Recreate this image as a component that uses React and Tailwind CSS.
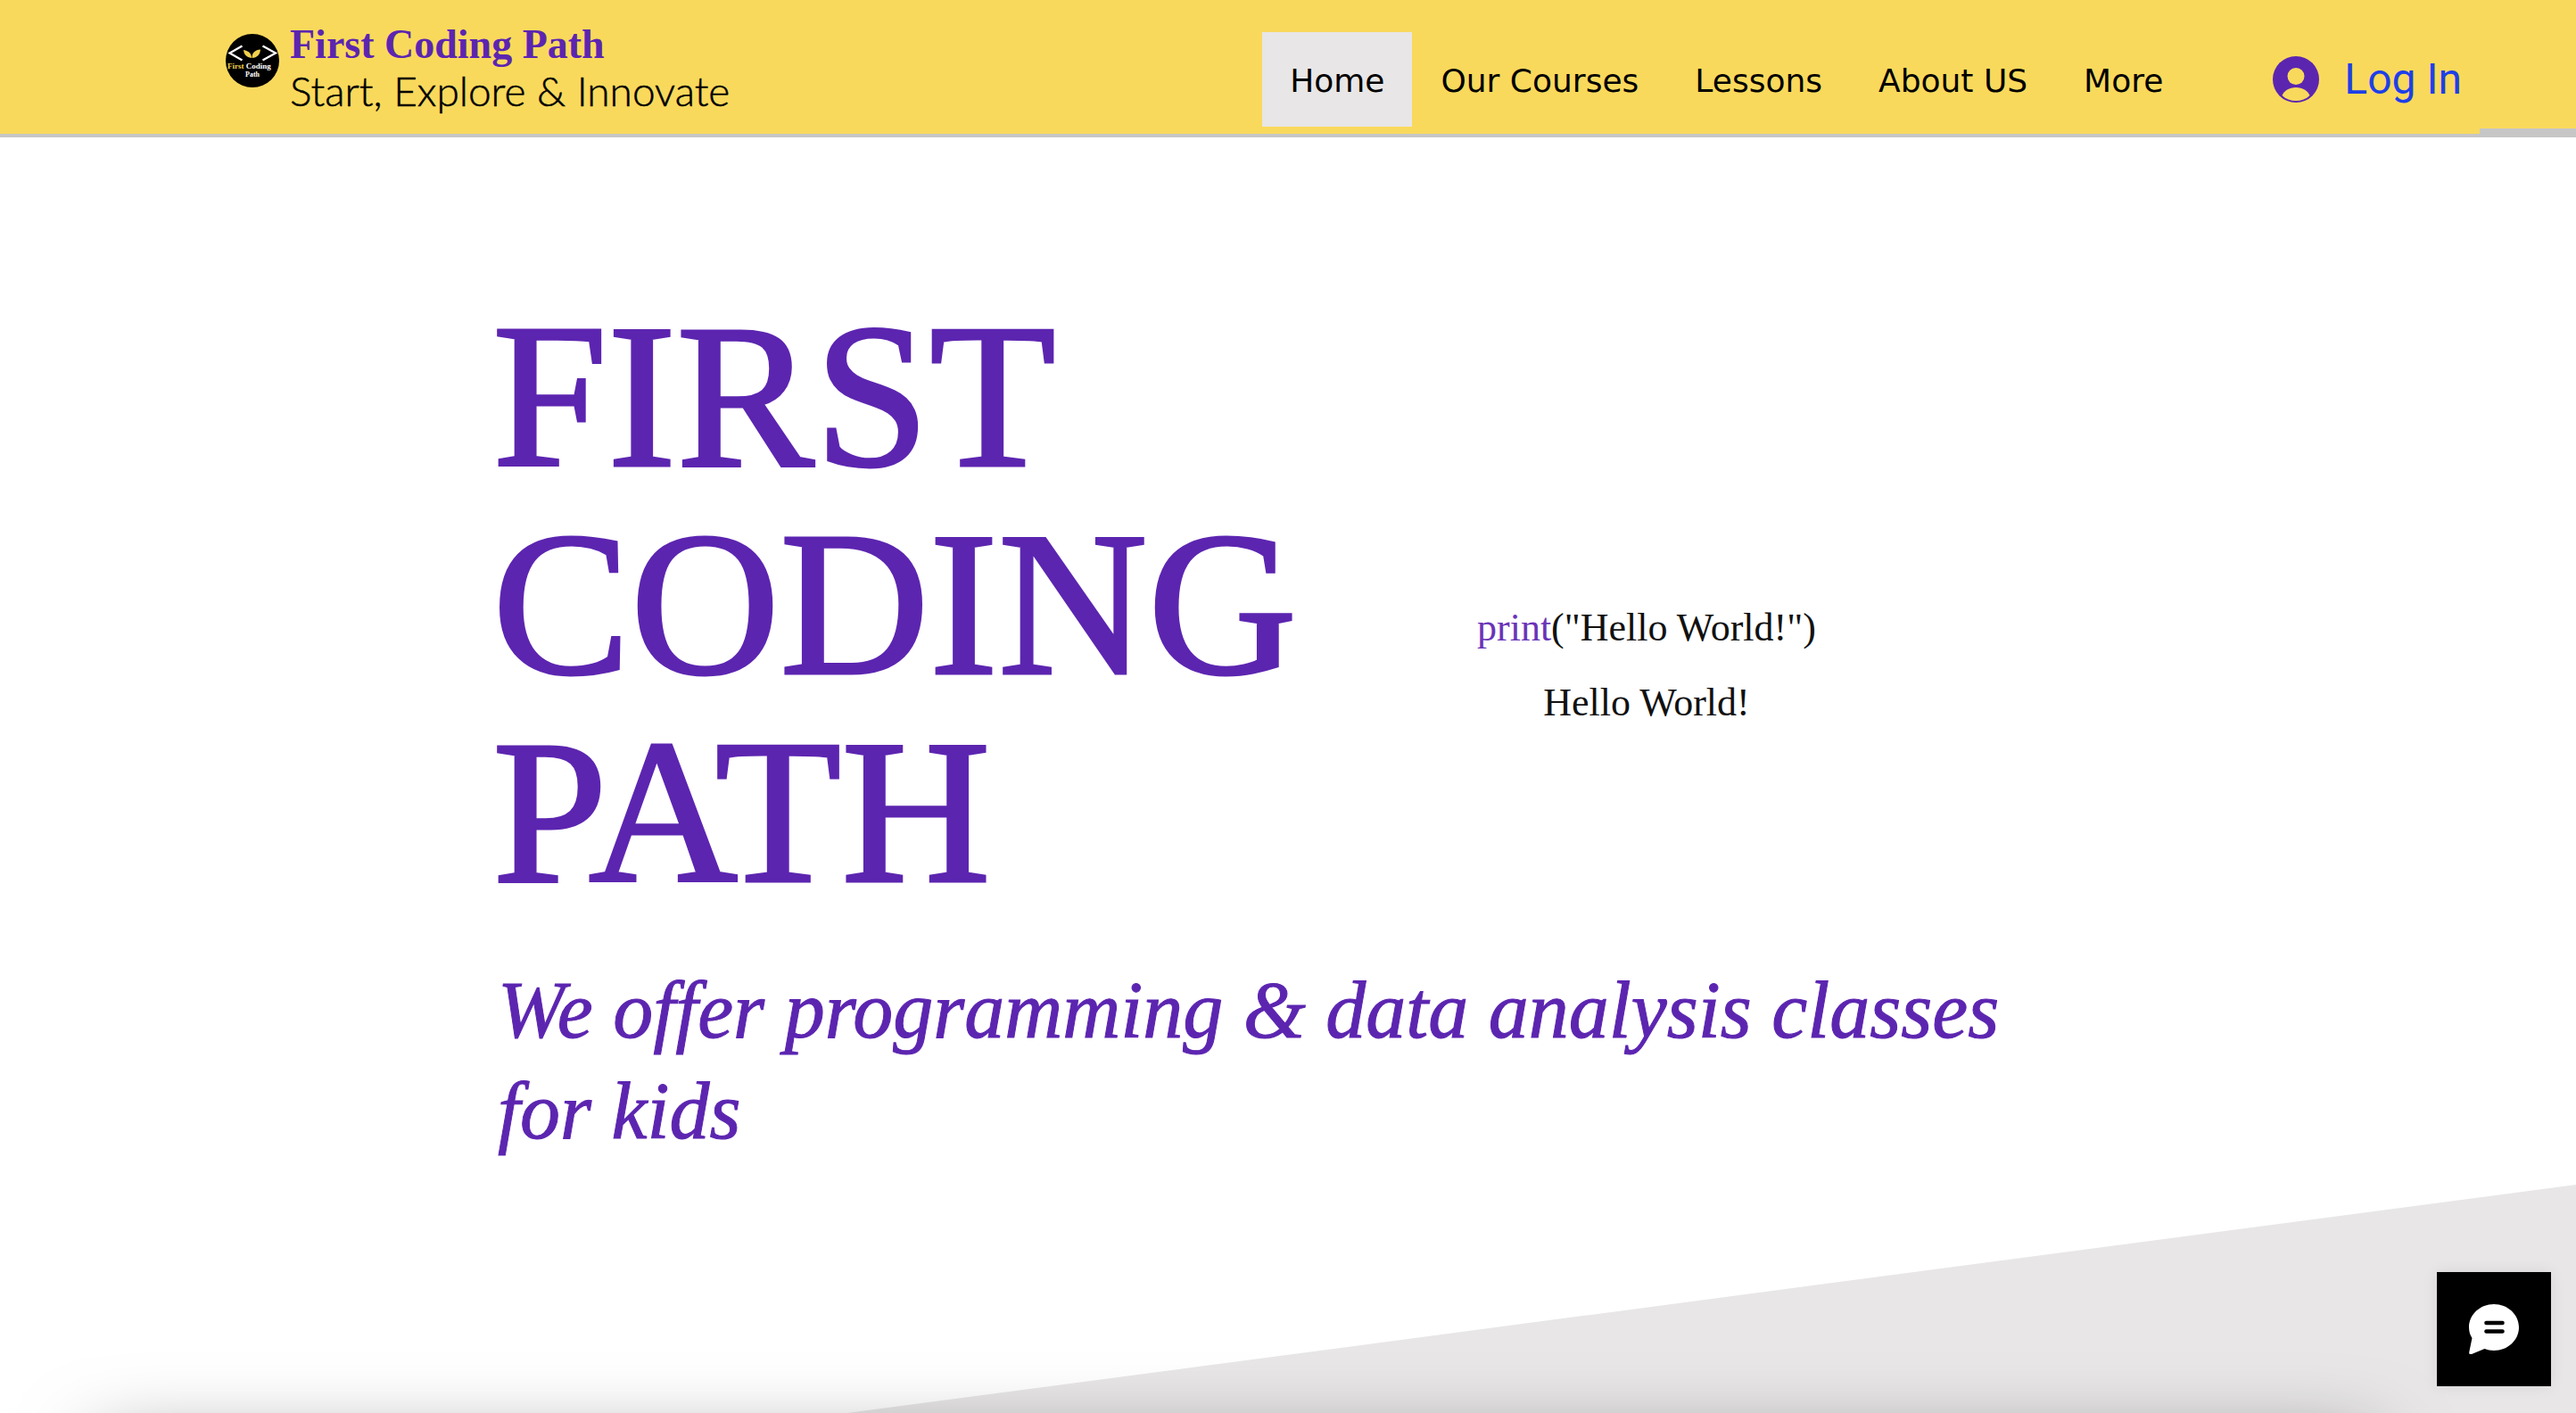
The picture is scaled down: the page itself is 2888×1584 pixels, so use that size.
import React from 'react';

const navItems = ['Home', 'Our Courses', 'Lessons', 'About US', 'More'];

function BrandMark() {
  return (
    <svg viewBox="0 0 60 60" className="mt-[38px] h-[60px] w-[60px] shrink-0" role="img" aria-label="First Coding Path logo">
      <circle cx="30" cy="30" r="30" fill="#000" />
      <path d="M18.5 13.5 4.5 21.5 18.5 29.5M41.5 13.5l14.5 8-14.5 8" fill="none" stroke="#fff" strokeWidth="2.2" />
      <path d="M29 27c-6-1-8.500-4-9-9 6 1 9 4 9 9ZM29.500 27c0-6 3.500-9 9.500-9.500-.5 6-3.500 9-9.500 9.500Z" fill="#f0d04c" />
      <text x="2" y="38.500" fontSize="9" fontWeight="700" fontFamily="Liberation Serif, serif" fill="#fff"><tspan fill="#f0d04c">First</tspan> Coding</text>
      <text x="30" y="48" textAnchor="middle" fontSize="8" fontWeight="700" fontFamily="Liberation Serif, serif" fill="#fff">Path</text>
    </svg>
  );
}

function Header() {
  return (
    <header className="relative flex h-[154px] justify-between border-b-4 border-[#c6c6c6] bg-[#f9d95c] pr-[128px] pl-[253px]">
      <div className="flex">
        <BrandMark />
        <div className="pl-[12px] pt-[20px] whitespace-nowrap">
          <p className="font-['Liberation_Serif',serif] text-[46px] leading-[60px] font-bold text-[#5c25b0]">First Coding Path</p>
          <p className="font-[Lato,sans-serif] text-[46px] leading-[44px] font-light text-black [-webkit-text-stroke:0.5px_#000]">Start, Explore &amp; Innovate</p>
        </div>
      </div>
      <div className="flex pt-[36px]">
        <nav className="flex h-[106px] gap-px" aria-label="Main">
          {navItems.map((item, i) => (
            <a
              key={item}
              href="#"
              className={`flex items-center px-[31px] pt-[3px] font-['DejaVu_Sans',sans-serif] text-[36px] whitespace-nowrap text-black ${i === 0 ? 'bg-[#e8e6e6]' : ''}`}
            >
              {item}
            </a>
          ))}
        </nav>
        <button type="button" className="ml-[92px] flex h-[106px] items-center gap-[28px] whitespace-nowrap">
          <svg viewBox="0 0 52 52" className="h-[52px] w-[52px]" aria-hidden="true">
            <circle cx="26" cy="26" r="26" fill="#5c25b0" />
            <circle cx="26" cy="22.500" r="9.500" fill="#f9d95c" />
            <path d="M10.500 44C13 38.500 18.500 35 26 35s13 3.500 15.500 9C37.500 48 32 50 26 50s-11.500-2-15.500-6Z" fill="#f9d95c" />
          </svg>
          <span className="font-[Roboto,sans-serif] text-[48px] text-[#1e40e8]">Log In</span>
        </button>
      </div>
      <div className="absolute right-0 bottom-0 h-[6px] w-[108px] bg-[#c6c6c6]" />
    </header>
  );
}

export default function App() {
  return (
    <div className="relative flex min-h-screen flex-col overflow-hidden bg-white">
      <Header />
      <main className="grow pl-[552px]">
        <div className="flex pt-[173px]">
          <h1 className="w-[1000px] font-['Liberation_Serif',serif] text-[232px] leading-[233px] text-[#5c25b0] [-webkit-text-stroke:3px_#5c25b0]">
            FIRST<br />CODING<br />PATH
          </h1>
          <div className="ml-[104px] pt-[335px] text-center font-['Liberation_Serif',serif] text-[44px] leading-[84px] whitespace-nowrap text-[#111]">
            <p><span className="text-[#6a34b8]">print</span>("Hello World!")</p>
            <p>Hello World!</p>
          </div>
        </div>
        <p className="mt-[50px] w-[1760px] pl-[6px] font-['Liberation_Serif',serif] text-[90px] leading-[113px] text-[#5c25b0] italic [-webkit-text-stroke:1px_#5c25b0]">
          We offer programming &amp; data analysis classes for kids
        </p>
      </main>
      <svg viewBox="0 0 1938 256" preserveAspectRatio="none" className="absolute right-0 bottom-0 h-[256px] w-[1938px]" aria-hidden="true">
        <path d="M1938 0V256H0Z" fill="#e8e6e7" />
      </svg>
      <div className="absolute right-[230px] -bottom-[240px] left-[110px] h-[200px] shadow-[0_0_90px_0_rgba(0,0,0,0.5)]" />
      <button type="button" aria-label="Open chat" className="absolute right-[28px] bottom-[30px] grid h-[128px] w-[128px] place-items-center bg-black shadow-[0_0_16px_rgba(0,0,0,0.08)]">
        <svg viewBox="0 0 56 56" className="h-[56px] w-[56px]" aria-hidden="true">
          <path d="M28 0C43.500 0 56 11.500 56 26S43.500 52 28 52c-4 0-7.500-.7-10.500-2L3 56c-2 .7-3-.3-2.800-2L3.500 38C1.200 34.500 0 30.500 0 26 0 11.500 12.500 0 28 0Z" fill="#fff" />
          <path d="M19.500 21h18M19.500 30.500h18" stroke="#000" strokeWidth="4.600" strokeLinecap="round" />
        </svg>
      </button>
    </div>
  );
}
